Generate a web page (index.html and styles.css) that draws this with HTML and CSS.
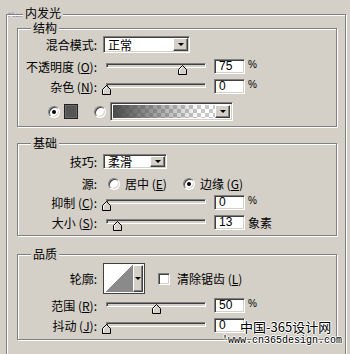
FILE: index.html
```html
<!DOCTYPE html>
<html lang="zh-CN">
<head>
    <meta charset="UTF-8">
    <title>内发光</title>
    <link rel="stylesheet" href="styles.css">
</head>
<body>
    <span class="mark-top">Flash</span>

    <div class="panel">
        <span class="panel-title">内发光</span>

        <div class="group struct">
            <span class="group-title">结构</span>
            <div class="row r-blend">
                <label class="lbl">混合模式:</label>
                <div class="select blend"><span class="select-value">正常</span><span class="select-btn"><i class="arrow"></i></span></div>
            </div>
            <div class="row r-opacity">
                <label class="lbl">不透明度 (<u>O</u>):</label>
                <div class="slider"><div class="track"></div><svg class="thumb" style="left:75px" width="9" height="10" viewBox="0 0 9 10"><path d="M0.5 9.5V4.5L4.5 0.5L8.5 4.5V9.5Z" fill="#d4d0c8" stroke="#000"/><path d="M1.5 8.5V4.9L4.5 1.9" fill="none" stroke="#fff"/></svg></div>
                <div class="num">75</div><span class="unit">%</span>
            </div>
            <div class="row r-noise">
                <label class="lbl">杂色 (<u>N</u>):</label>
                <div class="slider"><div class="track"></div><svg class="thumb" style="left:-1px" width="9" height="10" viewBox="0 0 9 10"><path d="M0.5 9.5V4.5L4.5 0.5L8.5 4.5V9.5Z" fill="#d4d0c8" stroke="#000"/><path d="M1.5 8.5V4.9L4.5 1.9" fill="none" stroke="#fff"/></svg></div>
                <div class="num">0</div><span class="unit">%</span>
            </div>
            <div class="row r-color">
                <span class="radio checked"></span>
                <span class="swatch"></span>
                <span class="radio radio-grad"></span>
                <div class="gradient"><span class="grad-fill"></span><span class="select-btn"><i class="arrow"></i></span></div>
            </div>
        </div>

        <div class="group basic">
            <span class="group-title">基础</span>
            <div class="row r-tech">
                <label class="lbl">技巧:</label>
                <div class="select tech"><span class="select-value">柔滑</span><span class="select-btn"><i class="arrow"></i></span></div>
            </div>
            <div class="row r-source">
                <label class="lbl">源:</label>
                <span class="radio src-center"></span><span class="opt">居中 (<u>E</u>)</span>
                <span class="radio checked src-edge"></span><span class="opt">边缘 (<u>G</u>)</span>
            </div>
            <div class="row r-choke">
                <label class="lbl">抑制 (<u>C</u>):</label>
                <div class="slider"><div class="track"></div><svg class="thumb" style="left:-1px" width="9" height="10" viewBox="0 0 9 10"><path d="M0.5 9.5V4.5L4.5 0.5L8.5 4.5V9.5Z" fill="#d4d0c8" stroke="#000"/><path d="M1.5 8.5V4.9L4.5 1.9" fill="none" stroke="#fff"/></svg></div>
                <div class="num">0</div><span class="unit">%</span>
            </div>
            <div class="row r-size">
                <label class="lbl">大小 (<u>S</u>):</label>
                <div class="slider"><div class="track"></div><svg class="thumb" style="left:10px" width="9" height="10" viewBox="0 0 9 10"><path d="M0.5 9.5V4.5L4.5 0.5L8.5 4.5V9.5Z" fill="#d4d0c8" stroke="#000"/><path d="M1.5 8.5V4.9L4.5 1.9" fill="none" stroke="#fff"/></svg></div>
                <div class="num">13</div><span class="unit unit-cn">象素</span>
            </div>
        </div>

        <div class="group quality">
            <span class="group-title">品质</span>
            <div class="row r-contour">
                <label class="lbl">轮廓:</label>
                <div class="contour"><span class="contour-pic"></span><span class="contour-btn"><i class="arrow"></i></span></div>
                <span class="check"></span><span class="opt">清除锯齿 (<u>L</u>)</span>
            </div>
            <div class="row r-range">
                <label class="lbl">范围 (<u>R</u>):</label>
                <div class="slider"><div class="track"></div><svg class="thumb" style="left:49px" width="9" height="10" viewBox="0 0 9 10"><path d="M0.5 9.5V4.5L4.5 0.5L8.5 4.5V9.5Z" fill="#d4d0c8" stroke="#000"/><path d="M1.5 8.5V4.9L4.5 1.9" fill="none" stroke="#fff"/></svg></div>
                <div class="num">50</div><span class="unit">%</span>
            </div>
            <div class="row r-jitter">
                <label class="lbl">抖动 (<u>J</u>):</label>
                <div class="slider"><div class="track"></div><svg class="thumb" style="left:-1px" width="9" height="10" viewBox="0 0 9 10"><path d="M0.5 9.5V4.5L4.5 0.5L8.5 4.5V9.5Z" fill="#d4d0c8" stroke="#000"/><path d="M1.5 8.5V4.9L4.5 1.9" fill="none" stroke="#fff"/></svg></div>
                <div class="num">0</div>
            </div>
        </div>
    </div>

    <span class="mark-cn">中国-365设计网</span>
    <span class="mark-url">'www.cn365design.com</span>
</body>
</html>
```

FILE: styles.css
```css
html, body {
    margin: 0;
    padding: 0;
    height: 354px;
    overflow: hidden;
}

body {
    position: relative;
    background-color: #d4d0c8;
    font-family: "Noto Sans CJK SC", "Liberation Sans", sans-serif;
    font-size: 12px;
    line-height: 14px;
    color: #000;
    padding-top: 14px;
    padding-left: 6px;
    box-sizing: border-box;
}

u {
    text-decoration: underline;
    text-underline-offset: 1px;
}

/* etched group boxes */
.panel, .group {
    position: relative;
    border: 1px solid #808080;
    box-shadow: inset 1px 1px 0 #fff, 1px 1px 0 #fff;
}

.panel {
    width: 340px;
    box-sizing: border-box;
    padding: 13px 8px 30px 10px;
}

.panel-title, .group-title {
    position: absolute;
    top: -7px;
    padding: 0 2px;
    line-height: 12px;
    background-color: #d4d0c8;
}

.panel-title {
    top: -8px;
    left: 16px;
}

.group-title {
    left: 13px;
}

.struct {
    padding: 7px 0 5px;
}

.basic {
    margin-top: 16px;
    padding: 10px 0 5px;
}

.quality {
    margin-top: 18px;
    padding: 8px 0 6px;
}

.row {
    display: flex;
    align-items: center;
    height: 15px;
}

.r-blend { height: 17px; }
.r-opacity { margin-top: 6px; }
.r-noise { margin-top: 5px; }
.r-color { margin-top: 8px; height: 19px; }
.r-source { margin-top: 9px; height: 12px; }
.r-choke, .r-size { margin-top: 5px; }
.r-contour { height: 31px; }
.r-range { margin-top: 4px; }
.r-jitter { margin-top: 5px; }

.lbl {
    width: 79px;
    margin-right: 6px;
    text-align: right;
    white-space: nowrap;
    flex: none;
}

/* sunken fields */
.select, .num, .gradient, .contour {
    box-sizing: border-box;
    background-color: #fff;
    border: 1px solid;
    border-color: #808080 #fff #fff #808080;
    box-shadow: inset 1px 1px 0 #404040, inset -1px -1px 0 #d4d0c8;
}

.select {
    display: flex;
    align-items: center;
    justify-content: space-between;
    padding: 1px;
}

.blend {
    width: 87px;
    height: 17px;
}

.tech {
    width: 64px;
    height: 15px;
}

.select-value {
    padding-left: 3px;
    line-height: 12px;
}

.select-btn, .contour-btn {
    display: flex;
    align-items: center;
    justify-content: center;
    box-sizing: border-box;
    width: 15px;
    height: 100%;
    background-color: #d4d0c8;
    border: 1px solid;
    border-color: #fff #404040 #404040 #fff;
    box-shadow: inset -1px -1px 0 #808080;
}

.arrow {
    width: 0;
    height: 0;
    border-left: 3px solid transparent;
    border-right: 3px solid transparent;
    border-top: 3px solid #000;
}

/* sliders */
.slider {
    position: relative;
    width: 107px;
    height: 15px;
    flex: none;
}

.track {
    position: absolute;
    left: 3px;
    top: 4px;
    width: 100px;
    height: 5px;
    box-sizing: border-box;
    background-color: #d4d0c8;
    border: 1px solid;
    border-color: #808080 #fff #fff #808080;
    box-shadow: inset 1px 1px 0 #404040;
}

.thumb {
    position: absolute;
    top: 6px;
    display: block;
}

.num {
    width: 31px;
    height: 15px;
    margin-left: 4px;
    padding-left: 4px;
    line-height: 13px;
    font-family: "Liberation Sans", sans-serif;
    font-size: 12px;
    flex: none;
}

.unit {
    margin-left: 3px;
    font-family: "Liberation Sans", sans-serif;
    font-size: 10px;
    align-self: flex-start;
    line-height: 12px;
}

.unit-cn {
    font-family: "Noto Sans CJK SC", sans-serif;
    font-size: 12px;
    align-self: center;
}

/* radios and checkbox */
.radio, .check {
    position: relative;
    box-sizing: border-box;
    width: 12px;
    height: 12px;
    flex: none;
    background-color: #fff;
    border: 1px solid;
    border-color: #808080 #fff #fff #808080;
    box-shadow: inset 1px 1px 0 #404040, inset -1px -1px 0 #d4d0c8;
}

.radio {
    border-radius: 50%;
}

.radio.checked::after {
    content: "";
    position: absolute;
    left: 3px;
    top: 3px;
    width: 4px;
    height: 4px;
    border-radius: 50%;
    background-color: #000;
}

.r-color .radio { margin-left: 30px; }
.r-color .radio-grad { margin-left: 16px; }

.swatch {
    box-sizing: border-box;
    width: 14px;
    height: 15px;
    margin-left: 4px;
    background-color: #555;
    border: 1px solid #222;
    box-shadow: inset 0 0 0 1px #6a6a6a;
}

.gradient {
    display: flex;
    width: 123px;
    height: 19px;
    margin-left: 4px;
    padding: 2px;
}

.grad-fill {
    flex: 1;
    background:
        linear-gradient(to right, #4a4a4a, rgba(80, 80, 80, 0.5) 45%, rgba(255, 255, 255, 0) 85%),
        repeating-conic-gradient(#c8c8c8 0 25%, #fff 0 50%) 0 0 / 8px 8px;
}

.src-center { margin-left: 5px; }
.src-edge { margin-left: 16px; }

.opt {
    margin-left: 5px;
    white-space: nowrap;
}

/* contour picker */
.contour {
    display: flex;
    width: 42px;
    height: 31px;
    margin-left: 0;
    padding: 1px;
    border-color: #404040;
    box-shadow: none;
}

.contour-pic {
    flex: 1;
    background: linear-gradient(to top left, #8a8a8a 50%, #fff 50%);
}

.contour-btn {
    width: 10px;
}

.check {
    margin-left: 13px;
}

.check + .opt {
    margin-left: 7px;
}

/* watermarks */
.mark-top {
    position: absolute;
    left: 8px;
    top: 11px;
    font-family: "DejaVu Sans Mono", monospace;
    font-size: 6px;
    line-height: 7px;
    font-weight: bold;
    color: #8a8ab4;
}

.mark-cn {
    position: absolute;
    left: 240px;
    top: 319px;
    font-size: 13px;
    line-height: 15px;
    color: #000;
    text-shadow: 1px 0 0 #fff, -1px 0 0 #fff, 0 1px 0 #fff, 0 -1px 0 #fff;
}

.mark-url {
    position: absolute;
    left: 222px;
    top: 335px;
    font-family: "Liberation Mono", monospace;
    font-size: 10px;
    line-height: 11px;
    color: #000;
    text-shadow: 1px 0 0 #fff, -1px 0 0 #fff, 0 1px 0 #fff, 0 -1px 0 #fff;
}
```
